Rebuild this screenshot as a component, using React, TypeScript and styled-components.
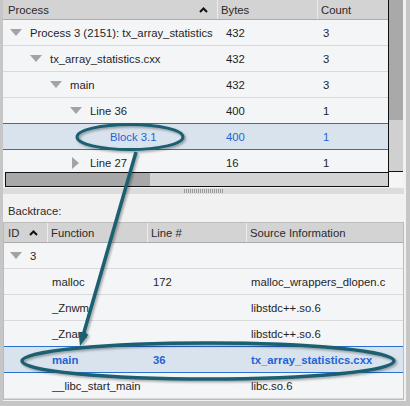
import React from "react";
import styled, { createGlobalStyle } from "styled-components";

const GlobalStyle = createGlobalStyle`
  body {
    margin: 0;
    background: #c4c4c4;
  }
`;

const Frame = styled.div`
  position: relative;
  width: 410px;
  height: 406px;
  box-sizing: border-box;
  padding: 0 4px 5px 3px;
  background: #c6c6c6;
  font-family: "Liberation Sans", Arial, sans-serif;
  font-size: 11.3px;
  color: #1f1f1f;
  overflow: hidden;
`;

const Panel = styled.div`
  height: 100%;
  box-sizing: border-box;
  padding: 0 2px 1px 0;
  background: #f1f1f1;
  display: flex;
  flex-direction: column;
`;

const TopPane = styled.div`
  display: grid;
  grid-template-columns: 1fr 14px;
  grid-template-rows: 172px 15px;
  margin-right: 1px;
`;

const Tree = styled.div`
  overflow: hidden;
  border-right: 1px solid #111;
  background: #f4f5f7;
`;

const VScroll = styled.div`
  background: linear-gradient(#a9a9a9 0 120px, #d0d0d0 120px);
  border-bottom: 1px solid #111;
`;

const HScroll = styled.div`
  margin-left: 2px;
  border: 1px solid #111;
  background: linear-gradient(to right, #a8a8a8 0 144px, #d3d3d3 144px);
`;

const Corner = styled.div`
  background: #f5f5f5;
`;

const HeaderRow = styled.div<{ $cols: string }>`
  display: grid;
  grid-template-columns: ${(p) => p.$cols};
  height: 19px;
  border-bottom: 1px solid #ababab;
  background: #d3d3d3;
`;

const HeadCell = styled.div<{ $first?: boolean; $pad?: number }>`
  display: flex;
  align-items: center;
  justify-content: space-between;
  padding: 0 9px 0 ${(p) => p.$pad ?? 3}px;
  border-left: ${(p) => (p.$first ? "none" : "1px solid #ececec")};
  white-space: nowrap;
  color: #2a2a2a;
`;

const Row = styled.div<{ $cols: string; $selected?: boolean; $bold?: boolean }>`
  display: grid;
  grid-template-columns: ${(p) => p.$cols};
  align-items: center;
  height: 25px;
  border-bottom: 1px solid ${(p) => (p.$selected ? "#2a6fd1" : "#d9d9d9")};
  box-shadow: ${(p) => (p.$selected ? "0 -1px 0 #2a6fd1" : "none")};
  background: ${(p) => (p.$selected ? "#d9e3ee" : "#f4f5f7")};
  color: ${(p) => (p.$selected ? "#1f63d4" : "#1f1f1f")};
  font-weight: ${(p) => (p.$bold ? 700 : 400)};
`;

const Cell = styled.div<{ $pad: number }>`
  display: flex;
  align-items: center;
  padding-left: ${(p) => p.$pad}px;
  white-space: nowrap;
`;

const Toggle = styled.span`
  display: inline-flex;
  align-items: center;
  width: 20px;
  flex: none;
`;

const Splitter = styled.div`
  height: 13px;
  display: flex;
  justify-content: center;
  align-items: flex-start;
  background: linear-gradient(#f1f1f1 0 1px, #dcdcdc 1px 7px, #f1f1f1 7px);
`;

const Grip = styled.div`
  width: 40px;
  height: 4px;
  margin-top: 2px;
  background: repeating-linear-gradient(
    to right,
    #9a9a9a 0 1px,
    transparent 1px 2px
  );
`;

const Label = styled.div`
  height: 22px;
  display: flex;
  align-items: center;
  padding-left: 5px;
  color: #2a2a2a;
`;

const Table = styled.div`
  border: 1px solid #bcbcbc;
  background: #f4f5f7;
`;

const Overlay = styled.svg`
  position: absolute;
  left: 0;
  top: 0;
  pointer-events: none;
`;

const TREE_COLS = "214px 100px 1fr";
const BT_COLS = "43px 100px 99px 1fr";

const DownTri = () => (
  <svg width="12" height="7" viewBox="0 0 12 7">
    <polygon points="0,0 12,0 6,7" fill="#a3a3a3" />
  </svg>
);

const RightTri = () => (
  <svg width="7" height="12" viewBox="0 0 7 12" style={{ marginLeft: 2 }}>
    <polygon points="0,0 7,6 0,12" fill="#a3a3a3" />
  </svg>
);

const SortUp = () => (
  <svg width="9" height="6" viewBox="0 0 9 6">
    <polyline points="1,5 4.5,1.5 8,5" fill="none" stroke="#111" strokeWidth="2" />
  </svg>
);

type TreeItem = {
  label: string;
  level: number;
  toggle?: "down" | "right";
  bytes: string;
  count: string;
  selected?: boolean;
};

const treeItems: TreeItem[] = [
  { label: "Process 3 (2151): tx_array_statistics", level: 0, toggle: "down", bytes: "432", count: "3" },
  { label: "tx_array_statistics.cxx", level: 1, toggle: "down", bytes: "432", count: "3" },
  { label: "main", level: 2, toggle: "down", bytes: "432", count: "3" },
  { label: "Line 36", level: 3, toggle: "down", bytes: "400", count: "1" },
  { label: "Block 3.1", level: 4, bytes: "400", count: "1", selected: true },
  { label: "Line 27", level: 3, toggle: "right", bytes: "16", count: "1" },
];

type StackFrame = { fn: string; line: string; source: string; selected?: boolean };

const frames: StackFrame[] = [
  { fn: "malloc", line: "172", source: "malloc_wrappers_dlopen.c" },
  { fn: "_Znwm", line: "", source: "libstdc++.so.6" },
  { fn: "_Znam", line: "", source: "libstdc++.so.6" },
  { fn: "main", line: "36", source: "tx_array_statistics.cxx", selected: true },
  { fn: "__libc_start_main", line: "", source: "libc.so.6" },
];

export default function App() {
  return (
    <Frame>
      <GlobalStyle />
      <Panel>
        <TopPane>
          <Tree>
            <HeaderRow $cols={TREE_COLS}>
              <HeadCell $first $pad={5}>
                Process
                <SortUp />
              </HeadCell>
              <HeadCell>Bytes</HeadCell>
              <HeadCell>Count</HeadCell>
            </HeaderRow>
            {treeItems.map((it) => (
              <Row key={it.label} $cols={TREE_COLS} $selected={it.selected}>
                <Cell $pad={7 + it.level * 20}>
                  <Toggle>
                    {it.toggle === "down" && <DownTri />}
                    {it.toggle === "right" && <RightTri />}
                  </Toggle>
                  {it.label}
                </Cell>
                <Cell $pad={9}>{it.bytes}</Cell>
                <Cell $pad={6}>{it.count}</Cell>
              </Row>
            ))}
          </Tree>
          <VScroll />
          <HScroll />
          <Corner />
        </TopPane>
        <Splitter>
          <Grip />
        </Splitter>
        <Label>Backtrace:</Label>
        <Table>
          <HeaderRow $cols={BT_COLS}>
            <HeadCell $first $pad={4}>
              ID
              <SortUp />
            </HeadCell>
            <HeadCell>Function</HeadCell>
            <HeadCell>Line #</HeadCell>
            <HeadCell>Source Information</HeadCell>
          </HeaderRow>
          <Row $cols={BT_COLS}>
            <Cell $pad={6}>
              <Toggle>
                <DownTri />
              </Toggle>
              3
            </Cell>
            <Cell $pad={5} />
            <Cell $pad={6} />
            <Cell $pad={5} />
          </Row>
          {frames.map((f) => (
            <Row key={f.fn} $cols={BT_COLS} $selected={f.selected} $bold={f.selected}>
              <Cell $pad={6} />
              <Cell $pad={5}>{f.fn}</Cell>
              <Cell $pad={6}>{f.line}</Cell>
              <Cell $pad={5}>{f.source}</Cell>
            </Row>
          ))}
        </Table>
      </Panel>

      <Overlay width="410" height="406" viewBox="0 0 410 406">
        <defs>
          <filter id="shade" x="-10%" y="-10%" width="120%" height="140%">
            <feDropShadow dx="1.5" dy="1.5" stdDeviation="1" floodColor="#000" floodOpacity="0.35" />
          </filter>
        </defs>
        <g filter="url(#shade)" stroke="#1a5f70" fill="none">
          <ellipse cx="130" cy="137" rx="53" ry="12.5" strokeWidth="3" />
          <ellipse cx="208" cy="361" rx="186" ry="18" strokeWidth="3.5" />
          <line x1="136" y1="152" x2="83.5" y2="334" strokeWidth="3.5" />
          <polygon points="80,346 88.5,334.5 78.5,331.8" fill="#1a5f70" stroke="none" />
        </g>
      </Overlay>
    </Frame>
  );
}
